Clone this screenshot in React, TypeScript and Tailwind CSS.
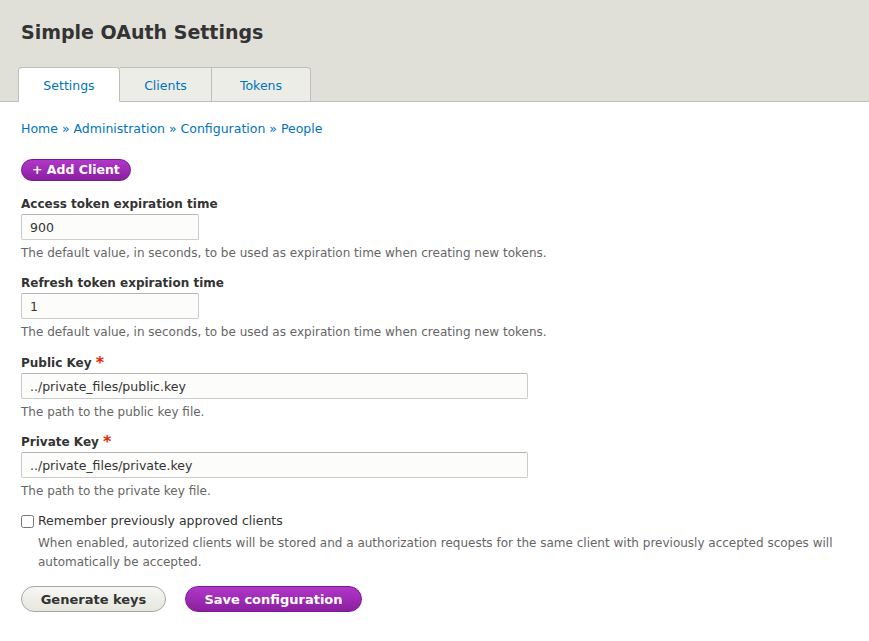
export default function App() {
  return (
    <div className="min-h-[641px] bg-white text-[#333] font-['DejaVu_Sans',sans-serif]">
      {/* Header */}
      <div className="bg-[#e0e0d8] border-b border-[#bfbfba] pl-[18px]">
        <h1 className="pl-[3px] pt-[18px] pb-[21px] text-[19px] leading-[28px] font-bold text-[#333]">
          Simple OAuth Settings
        </h1>
        <div className="flex -mb-px">
          <a className="w-[102px] h-[35px] pt-[3px] flex items-center justify-center bg-white border border-[#bfbfba] border-b-white rounded-t-[4px] text-[12.5px] text-[#0074bd]">
            Settings
          </a>
          <a className="w-[92px] h-[35px] pt-[3px] flex items-center justify-center bg-[#ededE7] border border-l-0 border-[#bfbfba] text-[12.5px] text-[#0074bd]">
            Clients
          </a>
          <a className="w-[99px] h-[35px] pt-[3px] flex items-center justify-center bg-[#ededE7] border border-l-0 border-[#bfbfba] rounded-tr-[4px] text-[12.5px] text-[#0074bd]">
            Tokens
          </a>
        </div>
      </div>

      {/* Body */}
      <div className="px-[21px] pt-[18px]">
        <div className="text-[12.5px] leading-[18px] text-[#0074bd]">
          Home » Administration » Configuration » People
        </div>

        <button className="mt-[21px] h-[22px] px-[10px] rounded-full bg-gradient-to-b from-[#b137c9] to-[#8b1fa0] border border-[#7a1a8e] text-white text-[12.5px] font-bold leading-none">
          + Add Client
        </button>

        <div className="mt-[14px]">
          <label className="block text-[12px] font-bold leading-[18px]">Access token expiration time</label>
          <input
            defaultValue="900"
            className="mt-[1px] block w-[178px] h-[26px] px-[8px] border border-[#ccc] border-t-[#b4b4b4] bg-[#fcfcfa] text-[12.5px] text-[#333] rounded-[2px]"
          />
          <p className="mt-[4px] text-[12px] leading-[18px] text-[#666]">
            The default value, in seconds, to be used as expiration time when creating new tokens.
          </p>
        </div>

        <div className="mt-[12px]">
          <label className="block text-[12px] font-bold leading-[18px]">Refresh token expiration time</label>
          <input
            defaultValue="1"
            className="mt-[1px] block w-[178px] h-[26px] px-[8px] border border-[#ccc] border-t-[#b4b4b4] bg-[#fcfcfa] text-[12.5px] text-[#333] rounded-[2px]"
          />
          <p className="mt-[4px] text-[12px] leading-[18px] text-[#666]">
            The default value, in seconds, to be used as expiration time when creating new tokens.
          </p>
        </div>

        <div className="mt-[13px]">
          <label className="block text-[12px] font-bold leading-[18px]">
            Public Key <span className="text-[#e62600] text-[16px] align-top">*</span>
          </label>
          <input
            defaultValue="../private_files/public.key"
            className="mt-[1px] block w-[507px] h-[26px] px-[8px] border border-[#ccc] border-t-[#b4b4b4] bg-[#fcfcfa] text-[12.5px] text-[#333] rounded-[2px]"
          />
          <p className="mt-[4px] text-[12px] leading-[18px] text-[#666]">The path to the public key file.</p>
        </div>

        <div className="mt-[12px]">
          <label className="block text-[12px] font-bold leading-[18px]">
            Private Key <span className="text-[#e62600] text-[16px] align-top">*</span>
          </label>
          <input
            defaultValue="../private_files/private.key"
            className="mt-[1px] block w-[507px] h-[26px] px-[8px] border border-[#ccc] border-t-[#b4b4b4] bg-[#fcfcfa] text-[12.5px] text-[#333] rounded-[2px]"
          />
          <p className="mt-[4px] text-[12px] leading-[18px] text-[#666]">The path to the private key file.</p>
        </div>

        <div className="mt-[12px]">
          <label className="flex items-center gap-[4px] text-[12.5px] leading-[18px]">
            <input type="checkbox" className="w-[13px] h-[13px] m-0" />
            Remember previously approved clients
          </label>
          <p className="pl-[17px] mt-[4px] text-[12px] leading-[19px] text-[#666]">
            When enabled, autorized clients will be stored and a authorization requests for the same client with previously accepted scopes will automatically be accepted.
          </p>
        </div>

        <div className="mt-[14px] flex gap-[19px]">
          <button className="w-[145px] h-[26px] rounded-full bg-gradient-to-b from-[#f6f6f3] to-[#e7e7df] border border-[#a6a6a6] text-[#333] text-[13px] font-bold leading-none">
            Generate keys
          </button>
          <button className="w-[177px] h-[26px] rounded-full bg-gradient-to-b from-[#b137c9] to-[#8b1fa0] border border-[#7a1a8e] text-white text-[13px] font-bold leading-none">
            Save configuration
          </button>
        </div>
      </div>
    </div>
  )
}
